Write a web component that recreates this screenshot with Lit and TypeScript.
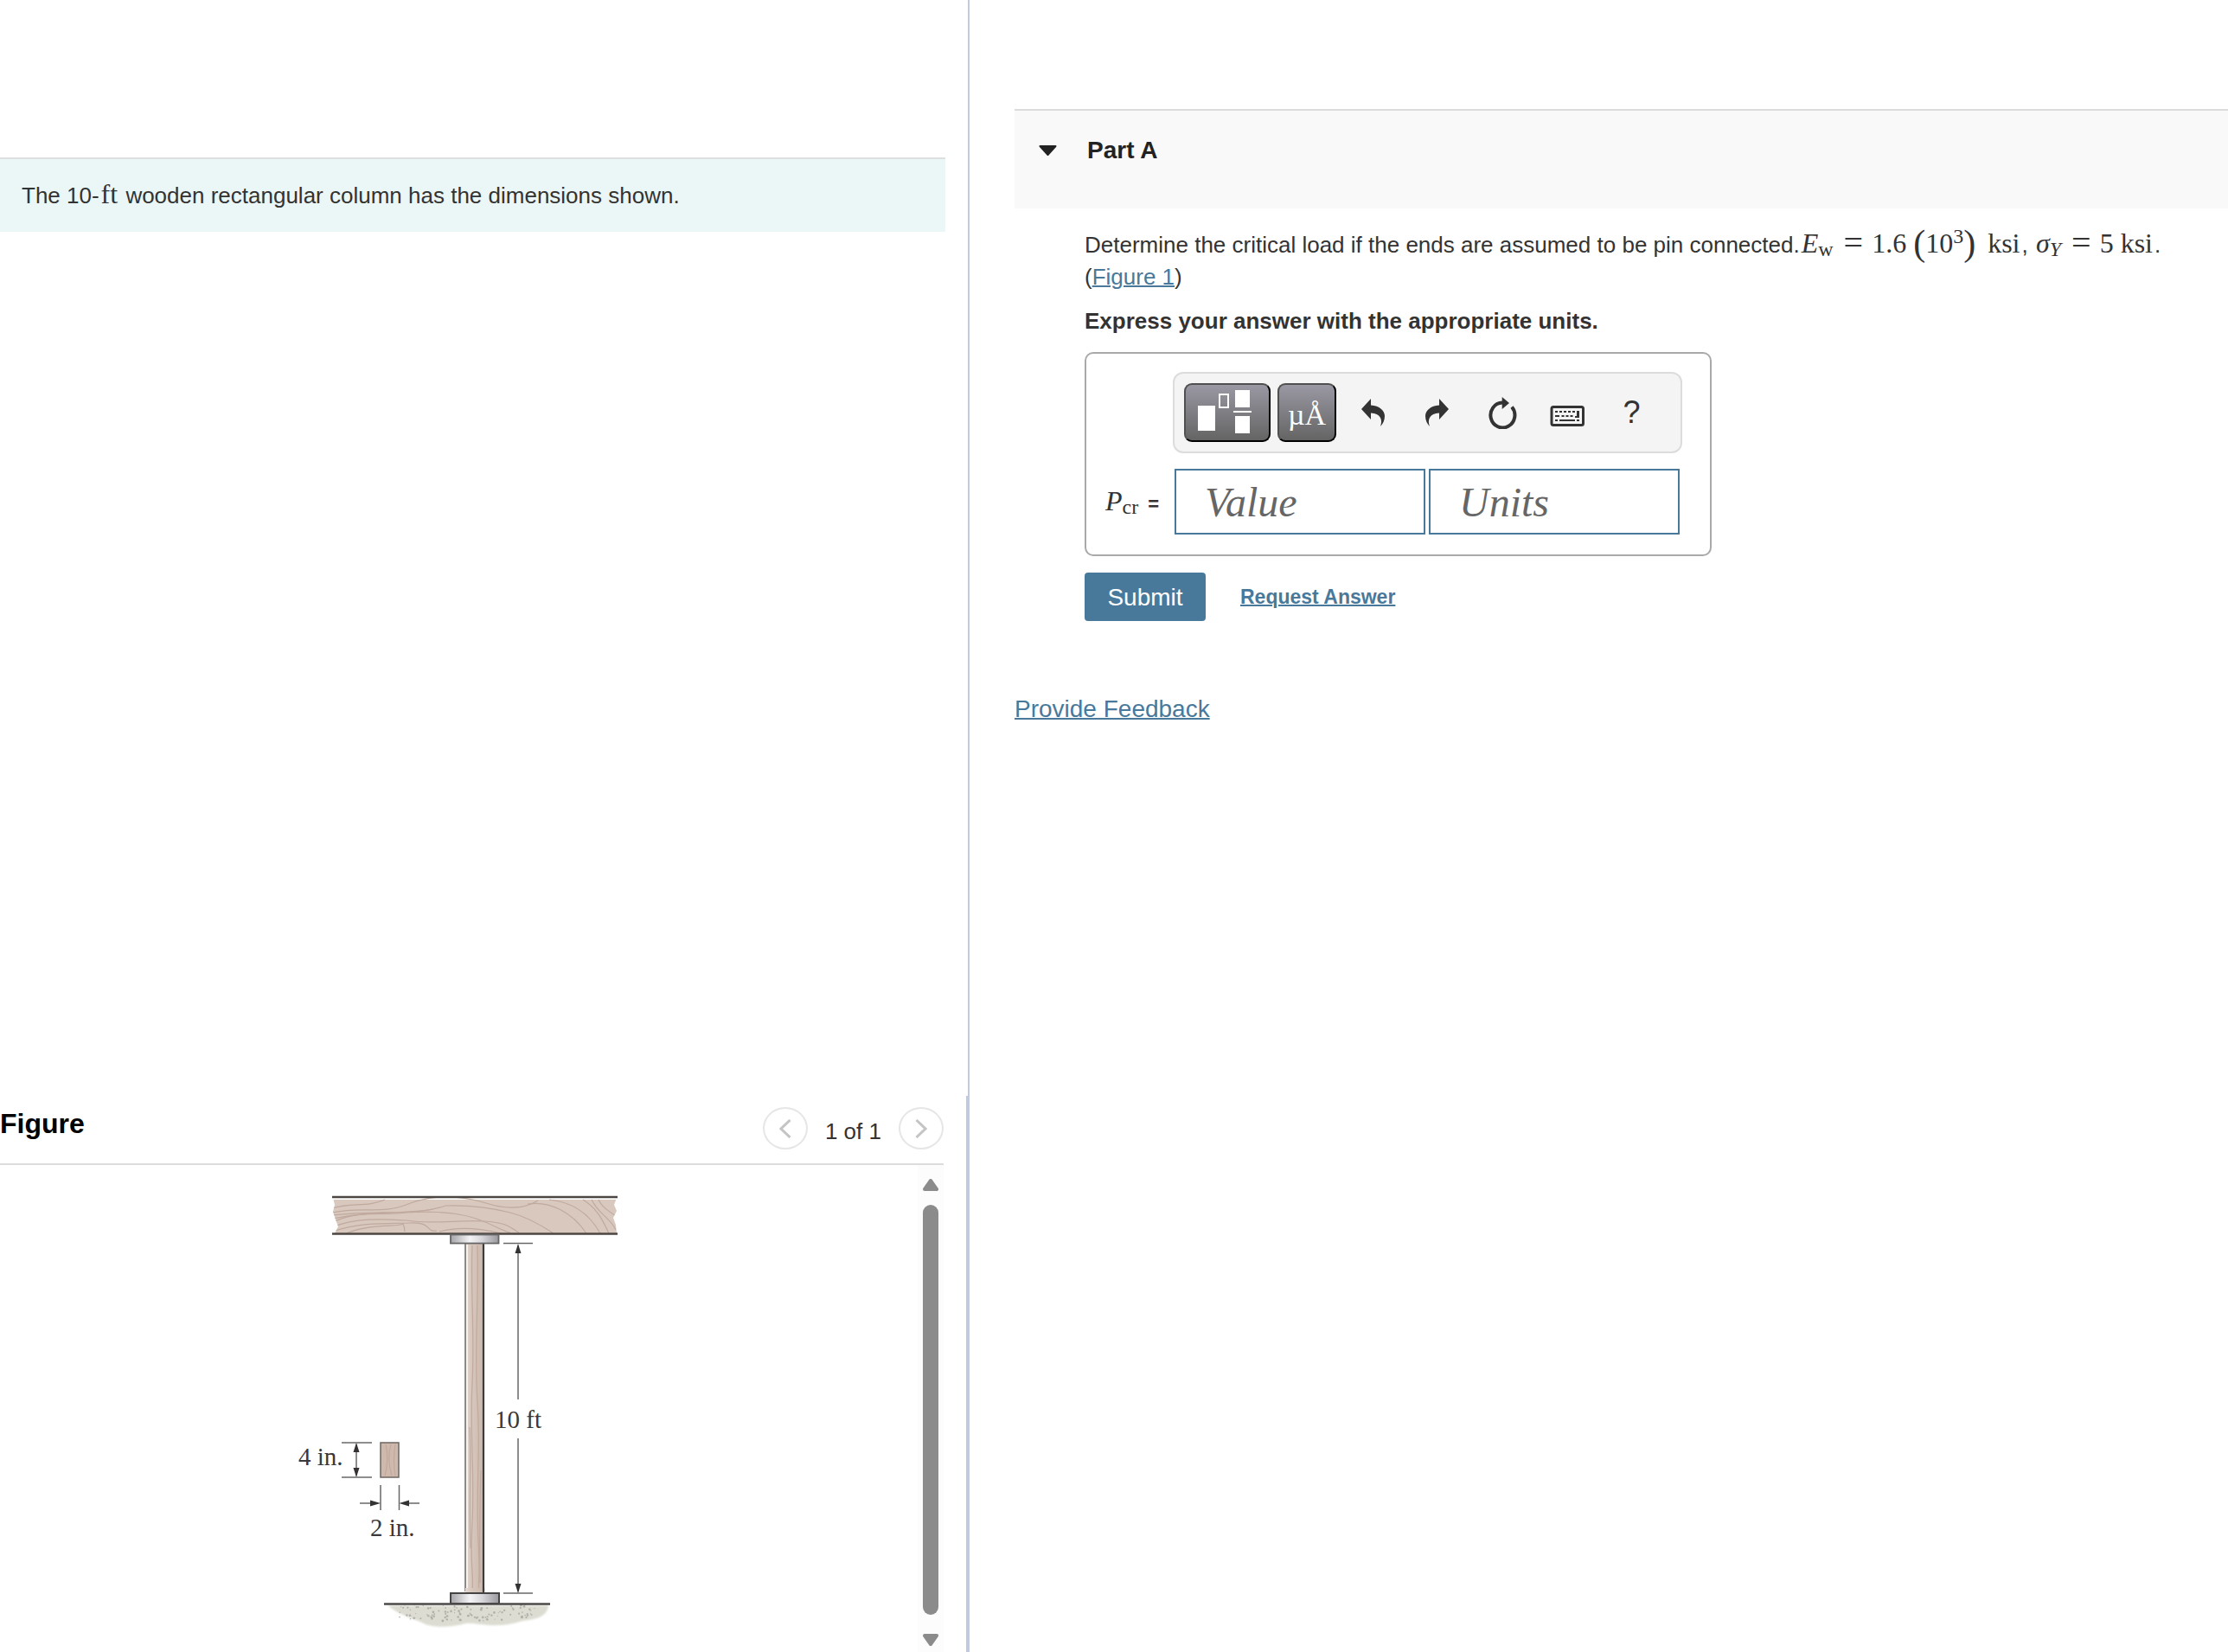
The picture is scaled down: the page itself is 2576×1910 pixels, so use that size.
import { LitElement, html, css, svg } from "lit";
import { customElement, state } from "lit/decorators.js";

/** Small repeatable pseudo-random sequence for the gravel texture. */
function speckles(count: number) {
  let seed = 7;
  const next = () => (seed = (seed * 16807) % 2147483647) / 2147483647;
  return Array.from({ length: count }, () => ({
    x: 462 + next() * 160,
    y: 1858 + next() * 18,
    r: 0.6 + next() * 0.8,
  }));
}

@customElement("column-figure")
export class ColumnFigure extends LitElement {
  static styles = css`
    :host {
      display: block;
    }
    .drawing {
      display: block;
      width: 381px;
      height: 540px;
    }
    .label {
      font-family: "Liberation Serif", serif;
      font-size: 29px;
      fill: #3a3838;
    }
    .grain {
      fill: none;
      stroke: #c0a99e;
      stroke-width: 1.2;
    }
    .rule {
      fill: none;
      stroke: #6a6868;
      stroke-width: 1.5;
    }
    .head {
      fill: #343232;
    }
  `;

  render() {
    return html`
      <svg class="drawing" viewBox="340 1367 381 540" role="img" aria-label="Column">
        <defs>
          <linearGradient id="plate">
            <stop offset="0" stop-color="#a4a4a9" />
            <stop offset="0.4" stop-color="#f4f4f6" />
            <stop offset="0.65" stop-color="#d8d8dc" />
            <stop offset="1" stop-color="#9a9a9e" />
          </linearGradient>
          <linearGradient id="post">
            <stop offset="0" stop-color="#e4dad4" />
            <stop offset="0.3" stop-color="#d8c8be" />
            <stop offset="1" stop-color="#ccb8ac" />
          </linearGradient>
          <filter id="soft" x="-5%" y="-20%" width="110%" height="140%">
            <feGaussianBlur stdDeviation="1" />
          </filter>
          <clipPath id="beam">
            <path d="M385 1385H713L710 1393L713 1400L709 1408L712 1416L713 1426H387L391 1418L388 1410L385 1401L387 1393Z" />
          </clipPath>
        </defs>

        <g clip-path="url(#beam)">
          <path fill="#d8c8be" d="M384 1387H716V1426H384Z" />
          <g class="grain">
            <path d="M384 1397C405 1390 425 1396 445 1387" />
            <path d="M384 1402C420 1394 440 1405 472 1392S540 1384 562 1391S606 1398 622 1388" />
            <path d="M384 1405C430 1400 470 1404 500 1398" />
            <path d="M384 1409C440 1397 480 1407 515 1394C545 1393 570 1397 590 1402S625 1416 640 1426" />
            <path d="M384 1413C420 1398 440 1406 470 1402C495 1400 520 1402 530 1404C560 1408 580 1424 590 1425" />
            <path d="M384 1419C410 1408 440 1409 470 1411C500 1416 530 1410 560 1412S590 1420 600 1425" />
            <path d="M384 1424C420 1412 450 1415 475 1414S492 1425 505 1423" />
            <path d="M400 1426C430 1414 460 1419 466 1415Q468 1419 468 1424" />
            <path d="M508 1424C530 1418 555 1420 580 1426" />
            <path d="M610 1392C636 1388 662 1402 678 1426" />
            <path d="M635 1387C666 1390 684 1408 694 1426" />
            <path d="M674 1387C692 1398 698 1414 704 1426" />
            <path d="M684 1387C692 1404 706 1408 712 1422" />
            <path d="M692 1387C696 1396 706 1402 716 1408" />
          </g>
        </g>
        <path stroke="#4d4744" stroke-width="2.400" d="M384 1384H714M384 1426.500H714" />

        <rect x="538" y="1438" width="21" height="404" fill="url(#post)" />
        <g class="grain">
          <path d="M546 1440C544 1500 549 1540 546 1600S549 1700 546 1760S548 1810 546 1841" />
          <path d="M552 1440C554 1500 548 1560 552 1620S550 1720 553 1780S552 1820 554 1841" />
          <path d="M543 1650C545 1690 542 1730 544 1790M556 1700Q554 1760 555 1830" />
        </g>
        <path stroke="#77716f" stroke-width="1.600" d="M538 1438V1841" />
        <path stroke="#f6f1ee" stroke-width="2" d="M540 1439V1841" />
        <path stroke="#3e3a39" stroke-width="2.200" d="M559 1438V1841" />
        <rect x="521" y="1427.500" width="55.500" height="10" fill="url(#plate)" stroke="#666" stroke-width="1.800" />

        <path fill="#dcdcd2" filter="url(#soft)" d="M448 1856H634C634 1866 624 1871 612 1873C600 1874 592 1879 576 1879C560 1880 548 1876 538 1877C520 1882 500 1882 490 1877C478 1871 462 1868 448 1856Z" />
        ${speckles(110).map((s) => svg`<circle cx=${s.x} cy=${s.y - Math.abs(s.x - 540) / 16} r=${s.r} fill="#b2b0a8" />`)}
        <path fill="#fff" d="M444 1840H637V1854H444Z" />
        <rect x="538" y="1836" width="21" height="6" fill="url(#post)" />
        <path stroke="#3e3a39" stroke-width="2.200" d="M559 1836V1842" />
        <rect x="521" y="1842" width="56" height="12" fill="url(#plate)" stroke="#444" stroke-width="2" />
        <path stroke="#4b4a48" stroke-width="2.400" d="M444 1854.500H636" />

        <path class="rule" d="M582 1437.500H616M582 1842H616M599 1440V1618M599 1663V1840" />
        <path class="head" d="M599 1438L602.500 1449H595.500ZM599 1842L602.500 1831H595.500Z" />
        <text class="label" x="572" y="1651">10 ft</text>

        <rect x="440" y="1668" width="21" height="40" fill="#cfb9ad" stroke="#6e6662" stroke-width="1.500" />
        <path class="grain" d="M446 1670Q450 1688 445 1706M452 1670Q447 1686 453 1706M457 1670Q454 1690 457 1706" />
        <path class="rule" d="M395 1668H430M395 1708H430M412 1670V1706M440 1717V1746M461.500 1717V1746M416 1738H436M465 1738H485" />
        <path class="head" d="M412 1668L415.500 1679H408.500ZM412 1708L415.500 1697H408.500ZM440 1738L428 1734.500V1741.500ZM461.500 1738L473 1734.500V1741.500Z" />
        <text class="label" x="345" y="1694">4 in.</text>
        <text class="label" x="428" y="1776">2 in.</text>
      </svg>
    `;
  }
}

@customElement("answer-box")
export class AnswerBox extends LitElement {
  static styles = css`
    :host {
      display: block;
    }
    * {
      box-sizing: border-box;
    }
    .box {
      display: inline-grid;
      grid-template-columns: 78px auto;
      row-gap: 18px;
      align-items: center;
      padding: 21px 32px 23px 22px;
      border: 2px solid #a9a9a9;
      border-radius: 10px;
    }
    .toolbar {
      grid-column: 2;
      display: flex;
      align-items: center;
      padding: 10px 11px;
      width: 589px;
      height: 94px;
      border: 2px solid #dcdcdc;
      border-radius: 12px;
      background: #f4f4f4;
    }
    button {
      margin: 0;
      padding: 0;
      font-family: "Liberation Sans", Arial, sans-serif;
      color: #333;
      cursor: pointer;
    }
    .palette {
      display: flex;
      align-items: center;
      justify-content: center;
      height: 68px;
      border: 2px solid #000;
      border-top-color: #505050;
      border-left-color: #505050;
      border-radius: 9px;
      background: linear-gradient(#9a98a3, #646464);
      color: #fff;
    }
    .templates {
      width: 100px;
      margin-right: 8px;
    }
    .symbols {
      width: 68px;
      margin-right: 4px;
      padding-top: 6px;
      font-family: "Liberation Serif", serif;
      font-size: 34px;
    }
    .tool {
      display: flex;
      align-items: center;
      justify-content: center;
      width: 75px;
      height: 68px;
      border: 0;
      background: none;
      font-size: 36px;
    }
    .label {
      display: flex;
      align-items: baseline;
      gap: 5px;
      padding-top: 4px;
      font-family: "Liberation Sans", Arial, sans-serif;
      font-size: 22px;
      font-weight: bold;
      color: #333;
      white-space: pre;
    }
    .quantity {
      font-family: "Liberation Serif", serif;
      font-size: 32px;
      font-weight: normal;
    }
    .quantity sub {
      font-size: 24px;
      line-height: 0;
      vertical-align: -4px;
    }
    .fields {
      display: flex;
      gap: 4px;
      padding-left: 2px;
    }
    .field {
      width: 290px;
      height: 76px;
      margin: 0;
      padding: 0 33px;
      border: 2px solid #48799b;
      border-radius: 0;
      background: #fff;
      font-family: "Liberation Serif", serif;
      font-size: 48px;
      color: #333;
    }
    .field::placeholder {
      font-style: italic;
      color: #666;
      opacity: 1;
    }
  `;

  render() {
    const back = svg`<path fill="#333" d="M1 13L12 1V8.500C22 9 28 15 28 21C28 26 26 30 23 33C26 25 23 18 12 17.500V25Z" />`;
    return html`
      <div class="box">
        <div class="toolbar" role="toolbar">
          <button class="palette templates" aria-label="Templates">
            <svg width="96" height="64" viewBox="2 2 96 64" fill="#fff">
              <rect x="16" y="26" width="20" height="29" />
              <rect x="41" y="13" width="10" height="15" fill="none" stroke="#fff" stroke-width="2" />
              <rect x="59" y="8" width="17" height="20" />
              <rect x="57" y="32" width="21" height="2" />
              <rect x="59" y="38" width="17" height="20" />
            </svg>
          </button>
          <button class="palette symbols">µÅ</button>
          <button class="tool" aria-label="Undo">
            <svg width="28" height="34" viewBox="0 0 28 34">${back}</svg>
          </button>
          <button class="tool" aria-label="Redo">
            <svg width="28" height="34" viewBox="0 0 28 34"><g transform="matrix(-1 0 0 1 28 0)">${back}</g></svg>
          </button>
          <button class="tool" aria-label="Reset">
            <svg width="34" height="38" viewBox="0 0 34 38">
              <path fill="none" stroke="#333" stroke-width="4" d="M28 12.500A14 14.500 0 1 1 17 7.500" />
              <path fill="#333" d="M16.700 1L25 8L16.700 15Z" />
            </svg>
          </button>
          <button class="tool" aria-label="Keyboard">
            <svg width="40" height="34" viewBox="0 0 40 34">
              <rect x="2" y="10.500" width="36.500" height="21" rx="2" fill="none" stroke="#333" stroke-width="3" />
              <path fill="#333" d="M6 15h3v2h-3zM11 15h3v2h-3zM16 15h3v2h-3zM21 15h3v2h-3zM26 15h3v2h-3zM31 15h3v8h-5v-2h2zM6 20h5v2h-5zM13.500 20h3v2h-3zM18.500 20h3v2h-3zM23.500 20h3v2h-3zM6 25h3v2h-3zM11 25h18v2h-18zM31 25h3v2h-3z" />
            </svg>
          </button>
          <button class="tool" aria-label="Help">?</button>
        </div>
        <label class="label" for="value"><span class="quantity"><i>P</i><sub>cr</sub></span> =</label>
        <div class="fields">
          <input class="field" id="value" type="text" placeholder="Value" />
          <input class="field" type="text" placeholder="Units" aria-label="Units" />
        </div>
      </div>
    `;
  }
}

@customElement("app-root")
export class AppRoot extends LitElement {
  @state() private open = true;

  static styles = css`
    :host {
      display: block;
      font-family: "Liberation Sans", Arial, sans-serif;
      font-size: 26px;
      line-height: 37px;
      color: #333;
    }
    * {
      box-sizing: border-box;
    }
    a {
      color: #48799b;
      text-decoration-thickness: 2px;
    }
    p {
      margin: 0;
    }
    .page {
      display: grid;
      grid-template-columns: 1121fr 1455fr;
      min-height: 100vh;
      background: #fff;
    }
    .left {
      display: grid;
      grid-template-rows: 1267fr 643fr;
      min-width: 0;
      height: 100vh;
    }
    .intro {
      padding: 182px 26px 0 0;
      border-right: 2px solid #c0cbdf;
    }
    .statement {
      padding: 24px 25px 23px;
      border-top: 2px solid #dcdfdf;
      background: #ebf7f7;
    }
    .math {
      margin: 0 2px;
      font-family: "Liberation Serif", serif;
      font-size: 32px;
      line-height: 1;
      white-space: nowrap;
    }
    .figure {
      display: flex;
      flex-direction: column;
      min-height: 0;
      padding-right: 26px;
      border-right: 4px solid #c0cbdf;
    }
    .figure-bar {
      display: flex;
      align-items: flex-start;
      justify-content: space-between;
      height: 80px;
      padding-top: 13px;
      border-bottom: 2px solid #dcdcdc;
    }
    .figure-title {
      margin: 0;
      padding-top: 1px;
      font-size: 32px;
      color: #000;
    }
    .pager {
      display: flex;
      align-items: center;
      gap: 20px;
      line-height: 57px;
    }
    .step {
      display: flex;
      align-items: center;
      justify-content: center;
      width: 52px;
      height: 49px;
      margin: 0 0 8px;
      padding: 0;
      border: 2px solid #e6e6e6;
      border-radius: 50%;
      background: #fff;
    }
    .view {
      flex: 1;
      display: flex;
      min-height: 0;
    }
    .canvas {
      flex: 1;
      display: flex;
      justify-content: center;
      align-items: flex-start;
      padding-top: 20px;
      overflow: hidden;
    }
    .scroll {
      display: flex;
      flex-direction: column;
      align-items: center;
      gap: 16px;
      width: 30px;
      padding: 16px 0 7px;
      background: #fcfcfc;
    }
    .thumb {
      flex: 1;
      width: 18px;
      margin-bottom: 6px;
      border-radius: 9px;
      background: #8b8b8b;
    }
    .arrow {
      display: block;
      flex: none;
    }
    .right {
      min-width: 0;
      padding: 126px 0 0 52px;
    }
    .part {
      height: 115px;
      border-top: 2px solid #dcdcdc;
      background: #f9f9f9;
    }
    .part-title {
      margin: 0;
      line-height: 32px;
    }
    .toggle {
      display: flex;
      align-items: center;
      gap: 35px;
      margin: 0;
      padding: 30px 28px;
      border: 0;
      background: none;
      font: inherit;
      font-size: 28px;
      color: #222;
      cursor: pointer;
    }
    .body {
      padding: 24px 0 0 81px;
    }
    .wide {
      font-size: 42px;
      line-height: 0;
      vertical-align: -3px;
    }
    .math sub,
    .math sup {
      font-size: 24px;
      line-height: 0;
    }
    .math sub {
      margin-right: 2px;
      vertical-align: -4px;
    }
    .math sup {
      vertical-align: 11px;
    }
    .rel {
      margin: 0 10px;
      font-size: 40px;
      line-height: 0;
      vertical-align: -2px;
    }
    .unit {
      margin-left: 14px;
    }
    .open {
      margin-left: 8px;
    }
    .instruction {
      margin: 14px 0 17px;
      font-weight: bold;
    }
    .actions {
      display: flex;
      align-items: center;
      gap: 40px;
      margin-top: 19px;
    }
    .submit {
      width: 140px;
      height: 56px;
      margin: 0;
      padding: 0;
      border: 0;
      border-radius: 4px;
      background: #48799b;
      font: inherit;
      font-size: 28px;
      color: #fff;
    }
    .request {
      font-size: 23px;
      font-weight: bold;
    }
    .feedback {
      margin-top: 86px;
      font-size: 28px;
      line-height: 32px;
    }
    answer-box {
      line-height: 0;
    }
  `;

  private toggle() {
    this.open = !this.open;
  }

  render() {
    return html`
      <main class="page">
        <div class="left">
          <section class="intro">
            <p class="statement">The 10-<span class="math">ft</span> wooden rectangular column has the dimensions shown.</p>
          </section>
          <section class="figure">
            <header class="figure-bar">
              <h2 class="figure-title">Figure</h2>
              <div class="pager">
                <button class="step" aria-label="Previous">
                  <svg width="14" height="22" viewBox="0 0 14 22"><path d="M12.500 1L2 11L12.500 21" fill="none" stroke="#c4c4c4" stroke-width="3" /></svg>
                </button>
                <span>1 of 1</span>
                <button class="step" aria-label="Next">
                  <svg width="14" height="22" viewBox="0 0 14 22"><path d="M1.500 1L12 11L1.500 21" fill="none" stroke="#c4c4c4" stroke-width="3" /></svg>
                </button>
              </div>
            </header>
            <div class="view">
              <div class="canvas"><column-figure></column-figure></div>
              <div class="scroll" aria-hidden="true">
                <svg class="arrow" width="18" height="14" viewBox="0 0 18 14"><path d="M9 2L16 12H2Z" fill="#8b8b8b" stroke="#8b8b8b" stroke-width="4" stroke-linejoin="round" /></svg>
                <div class="thumb"></div>
                <svg class="arrow" width="18" height="14" viewBox="0 0 18 14"><path d="M9 12L16 2H2Z" fill="#8b8b8b" stroke="#8b8b8b" stroke-width="4" stroke-linejoin="round" /></svg>
              </div>
            </div>
          </section>
        </div>
        <div class="right">
          <header class="part">
            <h2 class="part-title">
              <button class="toggle" aria-expanded=${this.open} @click=${this.toggle}>
                <svg width="21" height="12" viewBox="0 0 21 12"><path d="M1.500 1H19.500L10.500 11Z" fill="#222" stroke="#222" stroke-width="2" stroke-linejoin="round" /></svg>
                Part A
              </button>
            </h2>
          </header>
          ${this.open
            ? html`<div class="body">
                <p>
                  Determine the critical load if the ends are assumed to be pin connected.<span class="math"><i>E</i><sub>w</sub><span class="rel">=</span>1.6<span class="wide open">(</span>10<sup>3</sup><span class="wide">)</span><span class="unit">ksi</span></span>,
                  <span class="math"><i>σ</i><sub><i>Y</i></sub><span class="rel">=</span>5 ksi</span>.<br />
                  (<a href="#figure">Figure 1</a>)
                </p>
                <p class="instruction">Express your answer with the appropriate units.</p>
                <answer-box></answer-box>
                <div class="actions">
                  <button class="submit">Submit</button>
                  <a class="request" href="#answer">Request Answer</a>
                </div>
              </div>`
            : null}
          <p class="feedback"><a href="#feedback">Provide Feedback</a></p>
        </div>
      </main>
    `;
  }
}
